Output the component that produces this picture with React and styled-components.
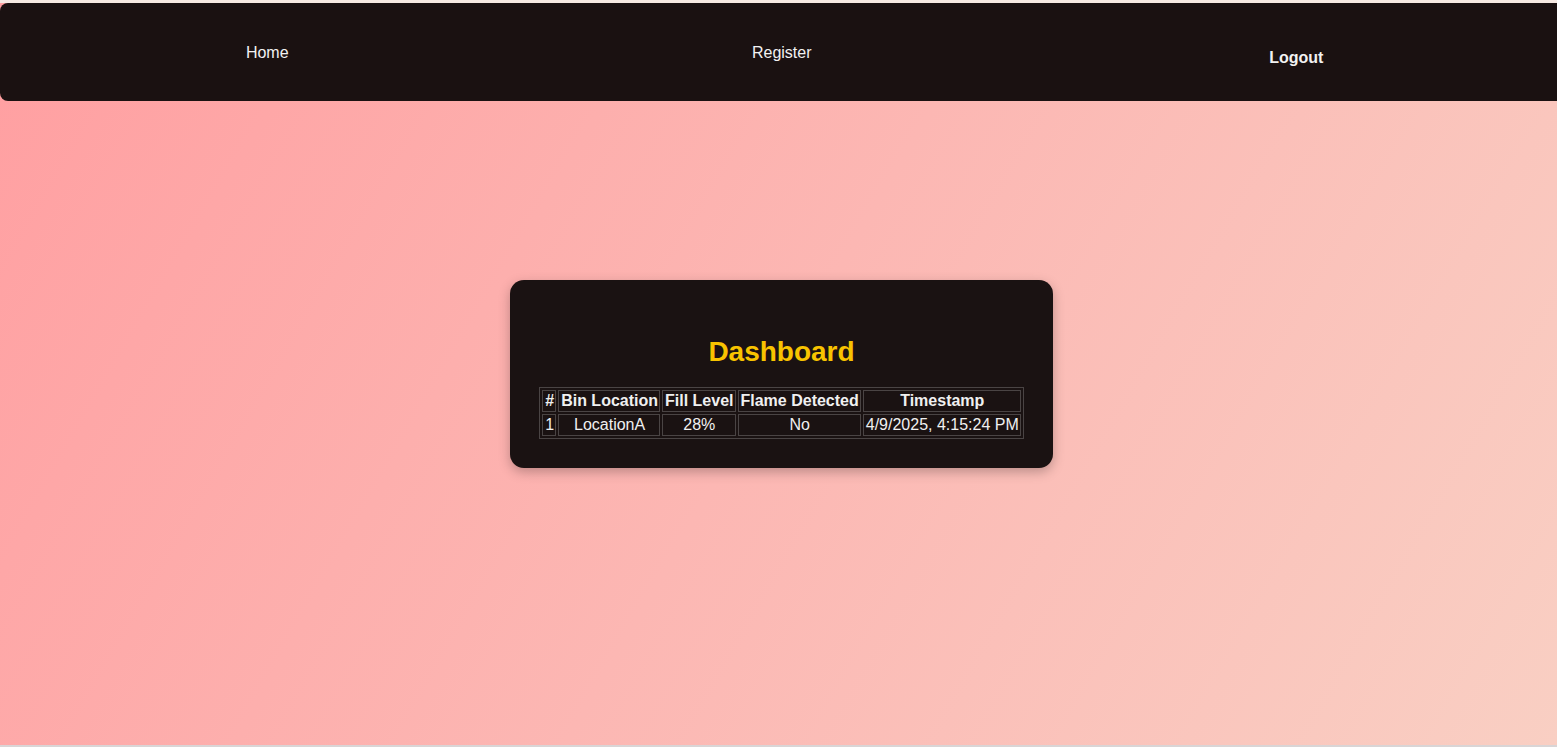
import React from "react";
import styled, { createGlobalStyle } from "styled-components";

const Global = createGlobalStyle`
  html, body { margin: 0; padding: 0; }
  body { font-family: "Liberation Sans", Arial, sans-serif; background: #f6e9e3; }
  * { box-sizing: border-box; }
`;

const Page = styled.div`
  height: 747px;
  border-top: 3px solid #f6e9e3;
  border-bottom: 2px solid #d9d5d6;
  background: linear-gradient(120deg, #ff9fa1 0%, #fcb7b3 50%, #f9cfc3 100%);
  display: flex;
  flex-direction: column;
  overflow: hidden;
`;

const Nav = styled.nav`
  height: 98px;
  background: #1a1111;
  border-radius: 8px 0 0 8px;
  display: grid;
  grid-template-columns: repeat(3, 514.5px);
  padding-left: 10px;
  flex-shrink: 0;
`;

const NavItem = styled.a`
  color: #f2f2f2;
  font-size: 16px;
  font-weight: ${(p) => (p.$bold ? 700 : 400)};
  text-decoration: none;
  text-align: center;
  padding-top: ${(p) => (p.$bold ? "46px" : "41px")};
`;

const Main = styled.main`
  flex: 1;
  display: flex;
  justify-content: center;
  padding-top: 179px;
  padding-left: 6px;
`;

const Card = styled.section`
  width: 543px;
  height: 188px;
  background: #1a1212;
  border-radius: 14px;
  box-shadow: 0 4px 12px rgba(0, 0, 0, 0.25);
  padding: 0 28px;
  display: flex;
  flex-direction: column;
  align-items: center;
`;

const Title = styled.h2`
  color: #f8c300;
  font-size: 28px;
  font-weight: 700;
  margin: 56px 0 19px;
  line-height: 32px;
`;

const Table = styled.table`
  border: 1px solid #4a4444;
  border-spacing: 2px;
  color: #f0f0f0;
  font-size: 16px;
`;

const Th = styled.th`
  border: 1px solid #4a4444;
  padding: 1px 1px 1px 2px;
  font-weight: 700;
  white-space: nowrap;
  text-align: center;
`;

const Td = styled.td`
  border: 1px solid #4a4444;
  padding: 1px 1px 1px 2px;
  white-space: nowrap;
  text-align: center;
`;

const rows = [
  { id: 1, loc: "LocationA", fill: "28%", flame: "No", ts: "4/9/2025, 4:15:24 PM" },
];

export default function App() {
  return (
    <>
      <Global />
      <Page>
        <Nav>
          <NavItem href="#">Home</NavItem>
          <NavItem href="#">Register</NavItem>
          <NavItem href="#" $bold>Logout</NavItem>
        </Nav>
        <Main>
          <Card>
            <Title>Dashboard</Title>
            <Table>
              <thead>
                <tr>
                  <Th>#</Th>
                  <Th>Bin Location</Th>
                  <Th>Fill Level</Th>
                  <Th>Flame Detected</Th>
                  <Th>Timestamp</Th>
                </tr>
              </thead>
              <tbody>
                {rows.map((r) => (
                  <tr key={r.id}>
                    <Td>{r.id}</Td>
                    <Td>{r.loc}</Td>
                    <Td>{r.fill}</Td>
                    <Td>{r.flame}</Td>
                    <Td>{r.ts}</Td>
                  </tr>
                ))}
              </tbody>
            </Table>
          </Card>
        </Main>
      </Page>
    </>
  );
}
